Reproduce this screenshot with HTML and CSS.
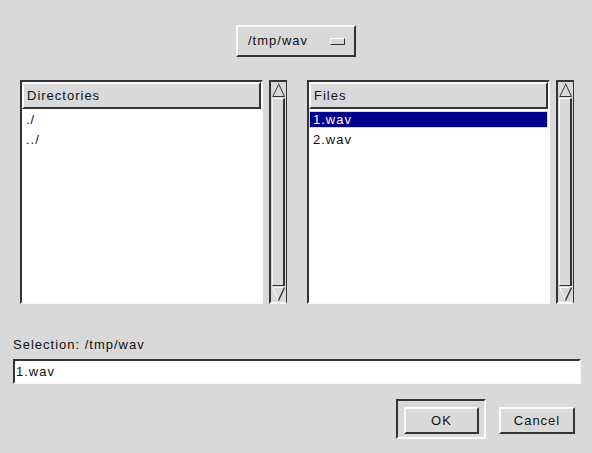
FILE: index.html
```html
<!DOCTYPE html>
<html>
<head>
<meta charset="utf-8">
<link rel="stylesheet" href="styles.css">
</head>
<body>
<div class="dialog">
  <div class="top-row">
    <div class="menubutton">
      <span class="mb-text">/tmp/wav</span>
      <span class="indicator"></span>
    </div>
  </div>

  <div class="lists">
    <div class="panel">
      <div class="listframe">
        <div class="header">Directories</div>
        <div class="items">
          <div class="item">./</div>
          <div class="item">../</div>
        </div>
      </div>
      <div class="scrollbar">
        <svg class="arrow" width="13" height="14" viewBox="0 0 13 14">
          <polyline points="0.5,13.5 6.5,0.5" fill="none" stroke="#fafafa" stroke-width="1"/>
          <polyline points="6.5,0.5 12.5,13.5 0.5,13.5" fill="none" stroke="#333333" stroke-width="1"/>
          <polyline points="1,13 6.5,1.5" fill="none" stroke="#333333" stroke-width="1"/>
        </svg>
        <div class="slider"></div>
        <svg class="arrow" width="13" height="14" viewBox="0 0 13 14">
          <polyline points="0.5,0.5 12.5,0.5" fill="none" stroke="#fafafa" stroke-width="1"/>
          <polyline points="0.5,0.5 6.5,13.5" fill="none" stroke="#fafafa" stroke-width="1"/>
          <polyline points="12.5,0.5 6.5,13.5" fill="none" stroke="#333333" stroke-width="1.4"/>
        </svg>
      </div>
    </div>

    <div class="panel">
      <div class="listframe">
        <div class="header">Files</div>
        <div class="items">
          <div class="item selected">1.wav</div>
          <div class="item">2.wav</div>
        </div>
      </div>
      <div class="scrollbar">
        <svg class="arrow" width="13" height="14" viewBox="0 0 13 14">
          <polyline points="0.5,13.5 6.5,0.5" fill="none" stroke="#fafafa" stroke-width="1"/>
          <polyline points="6.5,0.5 12.5,13.5 0.5,13.5" fill="none" stroke="#333333" stroke-width="1"/>
          <polyline points="1,13 6.5,1.5" fill="none" stroke="#333333" stroke-width="1"/>
        </svg>
        <div class="slider"></div>
        <svg class="arrow" width="13" height="14" viewBox="0 0 13 14">
          <polyline points="0.5,0.5 12.5,0.5" fill="none" stroke="#fafafa" stroke-width="1"/>
          <polyline points="0.5,0.5 6.5,13.5" fill="none" stroke="#fafafa" stroke-width="1"/>
          <polyline points="12.5,0.5 6.5,13.5" fill="none" stroke="#333333" stroke-width="1.4"/>
        </svg>
      </div>
    </div>
  </div>

  <div class="sel-label">Selection: /tmp/wav</div>
  <div class="entry">1.wav</div>

  <div class="buttons">
    <div class="default-ring">
      <div class="button ok">OK</div>
    </div>
    <div class="button cancel">Cancel</div>
  </div>
</div>
</body>
</html>
```

FILE: styles.css
```css
html, body {
  margin: 0;
  padding: 0;
  background: #d9d9d9;
}

.dialog {
  width: 592px;
  height: 453px;
  background: #d9d9d9;
  font-family: "Liberation Sans", Arial, sans-serif;
  font-size: 13px;
  letter-spacing: 1px;
  color: #111;
  box-sizing: border-box;
  overflow: hidden;
}

.top-row {
  display: flex;
  justify-content: center;
  padding-top: 25px;
}

.menubutton {
  width: 120px;
  height: 32px;
  box-sizing: border-box;
  border: 2px solid;
  border-color: #fafafa #333 #333 #fafafa;
  display: flex;
  align-items: center;
  padding-left: 10px;
}

.mb-text {
  line-height: 16px;
}

.indicator {
  width: 15px;
  height: 7px;
  box-sizing: border-box;
  border: 1px solid;
  border-color: #fafafa #333 #333 #fafafa;
  margin-left: 22px;
  margin-top: 1px;
}

.lists {
  display: flex;
  gap: 20px;
  padding-left: 20px;
  margin-top: 23px;
}

.panel {
  display: flex;
  gap: 6px;
  height: 224px;
}

.listframe {
  width: 243px;
  height: 224px;
  box-sizing: border-box;
  border: 2px solid;
  border-color: #333 #fafafa #fafafa #333;
  display: flex;
  flex-direction: column;
}

.header {
  height: 27px;
  box-sizing: border-box;
  border: 2px solid;
  border-color: #fafafa #333 #333 #fafafa;
  padding-left: 3px;
  display: flex;
  align-items: center;
}

.items {
  flex: 1;
  background: #ffffff;
  padding-top: 2px;
  display: flex;
  flex-direction: column;
  gap: 3px;
}

.item {
  height: 17px;
  line-height: 17px;
  padding-left: 4px;
  box-sizing: border-box;
}

.item.selected {
  background: #00008b;
  color: #ffffff;
  border: 1px solid #dcdcb0;
  line-height: 15px;
  padding-left: 3px;
}

.scrollbar {
  width: 18px;
  height: 224px;
  box-sizing: border-box;
  border-style: solid;
  border-width: 2px 1px 2px 2px;
  border-color: #333 #333 #fafafa #333;
  padding: 1px;
  display: flex;
  flex-direction: column;
}

.arrow {
  display: block;
  flex: none;
}

.slider {
  flex: 1;
  margin: 1px 0;
  box-sizing: border-box;
  border: 1px solid;
  border-color: #fafafa #333 #333 #fafafa;
  border-right-width: 2px;
}

.sel-label {
  margin-top: 33px;
  padding-left: 13px;
  height: 16px;
  line-height: 16px;
}

.entry {
  margin-top: 6px;
  margin-left: 13px;
  width: 568px;
  height: 25px;
  box-sizing: border-box;
  border: 2px solid;
  border-color: #333 #fafafa #fafafa #333;
  background: #ffffff;
  padding-left: 1px;
  line-height: 21px;
}

.buttons {
  display: flex;
  justify-content: flex-end;
  align-items: flex-start;
  gap: 13px;
  padding-right: 17px;
  margin-top: 15px;
}

.default-ring {
  width: 90px;
  height: 40px;
  box-sizing: border-box;
  border: 2px solid;
  border-color: #333 #fafafa #fafafa #333;
  padding: 6px 5px 5px 6px;
}

.button {
  height: 27px;
  box-sizing: border-box;
  border: 2px solid;
  border-color: #fafafa #333 #333 #fafafa;
  display: flex;
  align-items: center;
  justify-content: center;
}

.ok {
  width: 75px;
}

.cancel {
  width: 76px;
  margin-top: 8px;
}
```
